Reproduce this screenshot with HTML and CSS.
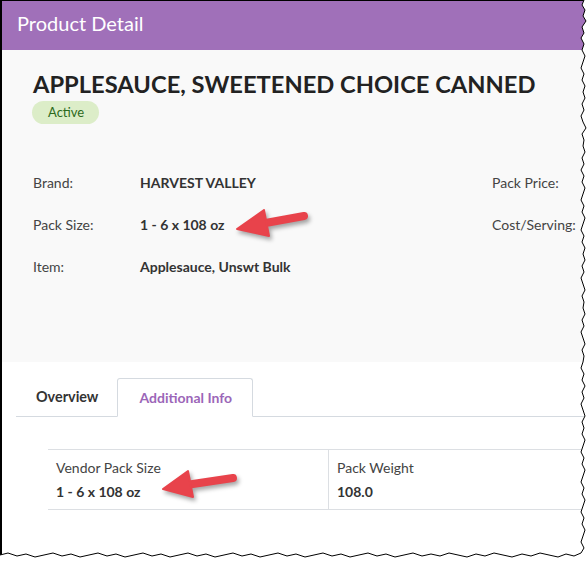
FILE: index.html
```html
<!DOCTYPE html>
<html lang="en">
<head>
  <meta charset="UTF-8">
  <meta name="viewport" content="width=device-width, initial-scale=1.0">
  <title>Product Detail</title>
  <link rel="stylesheet" href="styles.css">
</head>
<body>
  <div class="page">
    <div class="frame">
      <!-- Header -->
      <div class="header">Product Detail</div>

      <!-- Summary -->
      <div class="summary">
        <h1 class="title">APPLESAUCE, SWEETENED CHOICE CANNED</h1>
        <div class="status">
          <span class="badge">Active</span>
        </div>
        <div class="specs">
          <div class="spec-label">Brand:</div>
          <div class="spec-value">HARVEST VALLEY</div>
          <div class="spec-label">Pack Price:</div>

          <div class="spec-label">Pack Size:</div>
          <div class="spec-value">1 - 6 x 108 oz</div>
          <div class="spec-label">Cost/Serving:</div>

          <div class="spec-label">Item:</div>
          <div class="spec-value">Applesauce, Unswt Bulk</div>
        </div>
      </div>

      <!-- Tabs -->
      <div class="tabs">
        <div class="tab">Overview</div>
        <div class="tab active">Additional Info</div>
      </div>

      <div class="tab-panel">
        <div class="info-row">
          <div class="info-cell first">
            <div class="info-label">Vendor Pack Size</div>
            <div class="info-value">1 - 6 x 108 oz</div>
          </div>
          <div class="info-cell">
            <div class="info-label">Pack Weight</div>
            <div class="info-value">108.0</div>
          </div>
        </div>
      </div>
    </div>

    <!-- Callout arrows -->
    <svg class="arrows" width="588" height="562" viewBox="0 0 588 562">
      <g class="arrow">
        <line x1="304" y1="216" x2="260" y2="224"/>
        <polygon points="237,229 264,210 269,236"/>
      </g>
      <g class="arrow">
        <line x1="233" y1="478" x2="186" y2="485"/>
        <polygon points="163,489 188,471 193,497"/>
      </g>
    </svg>

    <!-- Torn screenshot edge -->
    <svg class="torn" width="588" height="562" viewBox="0 0 588 562">
      <path class="torn-fill" d="M584,0 L582,5 L585,10 L583,16 L586,21 L582,27 L584,33 L581,38 L584,44 L582,50 L585,56 L583,62 L581,68 L584,74 L582,80 L585,86 L583,92 L585,98 L582,104 L584,110 L581,116 L583,122 L586,128 L582,134 L584,140 L583,146 L585,152 L582,158 L584,164 L581,170 L584,176 L582,182 L585,188 L583,194 L581,200 L584,206 L582,212 L585,218 L583,224 L581,230 L584,236 L582,242 L585,248 L583,254 L585,260 L582,266 L584,272 L581,278 L583,284 L585,290 L582,296 L584,302 L583,308 L585,314 L582,320 L584,326 L581,332 L583,338 L585,344 L582,350 L584,356 L583,362 L581,368 L584,374 L582,380 L585,386 L582,392 L584,398 L581,404 L583,410 L585,416 L582,422 L584,428 L582,434 L585,440 L583,446 L581,452 L584,458 L582,464 L585,470 L583,476 L581,482 L584,488 L582,494 L585,500 L583,506 L581,512 L584,518 L582,524 L585,530 L583,536 L581,542 L584,548 L581,553 L574,556 L566,554 L558,557 L549,555 L540,553 L531,556 L522,554 L512,557 L503,555 L494,553 L485,556 L476,554 L467,557 L458,555 L449,553 L440,556 L431,554 L422,556 L413,553 L404,555 L395,557 L386,554 L377,556 L368,553 L359,555 L350,557 L341,554 L332,556 L323,553 L314,555 L305,557 L296,554 L287,556 L278,553 L269,555 L260,557 L251,554 L242,556 L233,553 L224,555 L215,557 L206,554 L197,556 L188,553 L179,555 L170,557 L161,554 L152,556 L143,553 L134,555 L125,557 L116,554 L107,556 L98,553 L89,555 L80,557 L71,554 L62,556 L53,553 L44,555 L35,557 L26,554 L17,556 L8,553 L0,555 L0,562 L588,562 L588,0 Z"/>
      <polyline class="torn-line" points="584,0 582,5 585,10 583,16 586,21 582,27 584,33 581,38 584,44 582,50 585,56 583,62 581,68 584,74 582,80 585,86 583,92 585,98 582,104 584,110 581,116 583,122 586,128 582,134 584,140 583,146 585,152 582,158 584,164 581,170 584,176 582,182 585,188 583,194 581,200 584,206 582,212 585,218 583,224 581,230 584,236 582,242 585,248 583,254 585,260 582,266 584,272 581,278 583,284 585,290 582,296 584,302 583,308 585,314 582,320 584,326 581,332 583,338 585,344 582,350 584,356 583,362 581,368 584,374 582,380 585,386 582,392 584,398 581,404 583,410 585,416 582,422 584,428 582,434 585,440 583,446 581,452 584,458 582,464 585,470 583,476 581,482 584,488 582,494 585,500 583,506 581,512 584,518 582,524 585,530 583,536 581,542 584,548 581,553 574,556 566,554 558,557 549,555 540,553 531,556 522,554 512,557 503,555 494,553 485,556 476,554 467,557 458,555 449,553 440,556 431,554 422,556 413,553 404,555 395,557 386,554 377,556 368,553 359,555 350,557 341,554 332,556 323,553 314,555 305,557 296,554 287,556 278,553 269,555 260,557 251,554 242,556 233,553 224,555 215,557 206,554 197,556 188,553 179,555 170,557 161,554 152,556 143,553 134,555 125,557 116,554 107,556 98,553 89,555 80,557 71,554 62,556 53,553 44,555 35,557 26,554 17,556 8,553 0,555"/>
    </svg>
  </div>
</body>
</html>
```

FILE: styles.css
```css
body {
  margin: 0;
  font-family: Lato, "Open Sans", sans-serif;
  background-color: #fff;
  color: #333;
}
.page {
  position: relative;
  width: 588px;
  height: 562px;
  overflow: hidden;
}
.frame {
  width: 588px;
  height: 562px;
  box-sizing: border-box;
  border-left: 2px solid #000;
  border-top: 1px solid #000;
  overflow: hidden;
}
.header {
  height: 49px;
  box-sizing: border-box;
  padding: 0 0 5px 15px;
  line-height: 44px;
  font-size: 20px;
  color: #fff;
  background-color: #a070b9;
}
.summary {
  height: 312px;
  box-sizing: border-box;
  padding: 20px 0 0 31px;
  background-color: #f9f9f9;
}
.title {
  margin: 0 0 3px;
  font-size: 23.7px;
  line-height: 1.2;
  font-weight: bold;
  color: #222;
  white-space: nowrap;
}
.status {
  display: flex;
  margin-left: -1px;
}
.badge {
  height: 23px;
  line-height: 23px;
  padding: 0 15px 0 16px;
  border-radius: 12px;
  font-size: 13px;
  color: #2c6a1c;
  background-color: #dcedc8;
}
.specs {
  display: grid;
  grid-template-columns: 107px 352px 120px;
  grid-auto-rows: 42px;
  margin-top: 38px;
  font-size: 14px;
  line-height: 42px;
  white-space: nowrap;
}
.spec-label {
  color: #444;
}
.spec-label:nth-child(3n + 1) {
  grid-column: 1;
}
.spec-value {
  font-weight: bold;
  color: #333;
}
.tabs {
  display: flex;
  margin: 16px 0 0 14px;
  border-bottom: 1px solid #d5dae0;
}
.tab {
  height: 38px;
  line-height: 38px;
  padding: 0 19px 0 20px;
  font-size: 14.4px;
  font-weight: bold;
  color: #333;
}
.tab.active {
  height: 39px;
  box-sizing: border-box;
  margin-bottom: -1px;
  padding: 0 20px 0 21px;
  line-height: 37px;
  border: 1px solid #d5dae0;
  border-bottom-color: #fff;
  border-radius: 3px 3px 0 0;
  background-color: #fff;
  font-size: 14px;
  color: #9b66b8;
}
.tab-panel {
  padding: 32px 0 0 46px;
}
.info-row {
  display: flex;
  width: 700px;
  border-top: 1px solid #dcdfe3;
  border-bottom: 1px solid #dcdfe3;
}
.info-cell {
  padding: 6px 8px 5px;
  font-size: 14px;
  line-height: 24px;
}
.info-cell.first {
  width: 281px;
  box-sizing: border-box;
  border-right: 1px solid #dcdfe3;
}
.info-label {
  color: #444;
}
.info-value {
  font-weight: bold;
  color: #333;
}
.arrows,
.torn {
  position: absolute;
  top: 0;
  left: 0;
}
.arrows {
  filter: drop-shadow(2px 3px 2px rgba(0, 0, 0, 0.35));
}
.arrow line {
  stroke: #e8434b;
  stroke-width: 8;
  stroke-linecap: round;
}
.arrow polygon {
  fill: #e8434b;
  stroke: #e8434b;
  stroke-width: 2;
  stroke-linejoin: round;
}
.torn-fill {
  fill: #fff;
}
.torn-line {
  fill: none;
  stroke: #000;
  stroke-width: 1;
}
```
